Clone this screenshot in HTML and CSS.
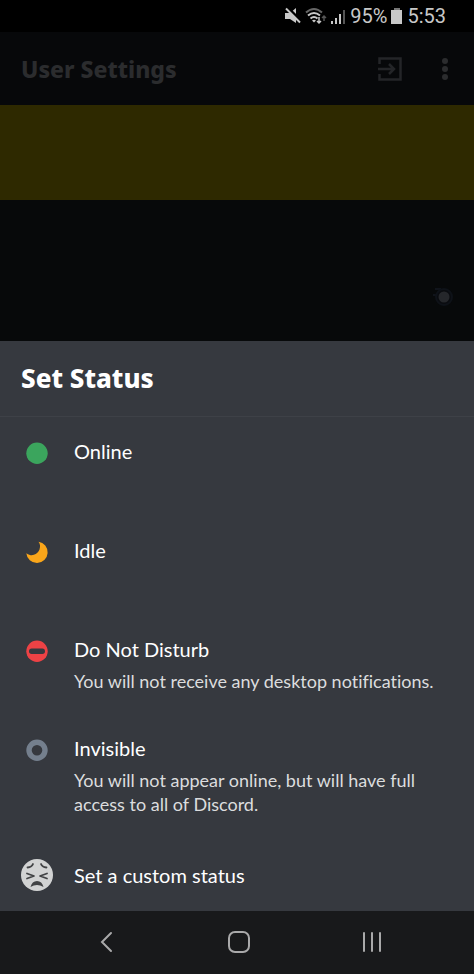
FILE: index.html
```
<!DOCTYPE html>
<html lang="en">
<head>
<meta charset="utf-8">
<meta name="viewport" content="width=device-width, initial-scale=1">
<title>User Settings</title>
<link rel="stylesheet" href="styles.css">
</head>
<body>
<div class="status-bar">
  <svg width="16" height="18" viewBox="0 0 16 18" aria-hidden="true">
    <path fill="#c8c8c8" d="M0 6h5l6-5v15l-6-4H0z"/>
    <path d="M2 0l14 14" stroke="#000" stroke-width="3"/>
    <path d="M1 1.500l14 14" stroke="#c8c8c8" stroke-width="2"/>
  </svg>
  <svg width="22" height="18" viewBox="0 0 22 18" fill="none" aria-hidden="true">
    <path d="M1 5.500q8-7 16 0" stroke="#666" stroke-width="2"/>
    <path d="M3 8.500q6-5 12 0M5.500 11.500q3.500-3 7 0" stroke="#c8c8c8" stroke-width="2"/>
    <path fill="#c8c8c8" d="M7 13.500q2-1.500 4 0l-2 2z"/>
    <path d="M14 10v6m-2-2l2 2 2-2" stroke="#c8c8c8" stroke-width="1.500"/>
    <path d="M19 14V9m-2 2l2-2 2 2" stroke="#555" stroke-width="1.500"/>
  </svg>
  <svg width="15" height="18" viewBox="0 0 15 18" aria-hidden="true">
    <path fill="#c8c8c8" d="M0 14h2v3H0zM4 11h2v6H4zM8 7h2v10H8z"/>
    <path fill="#555" d="M12 3h2v14h-2z"/>
  </svg>
  <span class="battery-level">95%</span>
  <svg width="12" height="18" viewBox="0 0 12 18" aria-hidden="true">
    <path fill="#777" d="M3 1h6v2H3z"/>
    <path fill="#c8c8c8" d="M0 3h11v14H0z"/>
  </svg>
  <time>5:53</time>
</div>

<header class="app-bar">
  <h1>User Settings</h1>
  <button class="icon-button" type="button" aria-label="Log out">
    <svg width="26" height="26" viewBox="0 0 26 26" fill="none" stroke="#242528" stroke-width="2.500">
      <path d="M2.500 8V2.500h21v21h-21V18M1 13h15M12 8l5 5-5 5"/>
    </svg>
  </button>
  <button class="icon-button" type="button" aria-label="More options">
    <svg width="6" height="22" viewBox="0 0 6 22" fill="#2b2c2e">
      <circle cx="3" cy="3" r="3"/><circle cx="3" cy="11" r="3"/><circle cx="3" cy="19" r="3"/>
    </svg>
  </button>
</header>

<div class="banner"></div>
<div class="profile">
  <svg width="30" height="22" viewBox="0 0 30 22" aria-hidden="true">
    <path d="M10 3h6M8 9h6" stroke="#10141b" stroke-width="2"/>
    <circle cx="19" cy="11" r="8" fill="#0a0c10" stroke="#0e1218" stroke-width="2"/>
    <circle cx="19" cy="11" r="5.500" fill="#25272b"/>
  </svg>
</div>

<main class="sheet">
  <h2>Set Status</h2>
  <button class="option" type="button">
    <svg width="32" height="32" viewBox="0 0 32 32" aria-hidden="true"><circle cx="16" cy="16.300" r="10.700" fill="#3ba55d"/></svg>
    <span class="label"><span class="name">Online</span></span>
  </button>
  <button class="option" type="button">
    <svg width="32" height="32" viewBox="0 0 32 32" aria-hidden="true"><path fill="#faa61a" d="M17.500 5.700A10.700 10.700 0 1 1 5.300 17.300A8.400 8.400 0 0 0 18.500 13.500Q20 9 17.500 5.700z"/></svg>
    <span class="label"><span class="name">Idle</span></span>
  </button>
  <button class="option" type="button">
    <svg width="32" height="32" viewBox="0 0 32 32" aria-hidden="true"><circle cx="16" cy="16.300" r="10.700" fill="#ed4245"/><rect x="8" y="13.600" width="16" height="5.400" rx="2.700" fill="#36393f"/></svg>
    <span class="label"><span class="name">Do Not Disturb</span><span class="detail">You will not receive any desktop notifications.</span></span>
  </button>
  <button class="option" type="button">
    <svg width="32" height="32" viewBox="0 0 32 32" aria-hidden="true"><circle cx="16" cy="16.300" r="8" fill="none" stroke="#747f8d" stroke-width="5.400"/></svg>
    <span class="label"><span class="name">Invisible</span><span class="detail">You will not appear online, but will have full access to all of Discord.</span></span>
  </button>
  <button class="option custom" type="button">
    <svg width="32" height="32" viewBox="0 0 32 32" aria-hidden="true">
      <circle cx="16" cy="16" r="16" fill="#d2d3d3"/>
      <g fill="none" stroke="#424345" stroke-width="1.800" stroke-linecap="round" stroke-linejoin="round">
        <path d="M6.500 8.500q4.500-.5 5.500-3.500M25.500 8.500q-4.500-.5-5.500-3.500"/>
        <path d="M6 14.500l7 2.500-7 2.500M26 14.500l-7 2.500 7 2.500"/>
      </g>
      <path fill="#424345" d="M9.500 28q1.500-6 6.500-6t6.500 6q-6.500-4-13 0z"/>
    </svg>
    <span class="label"><span class="name">Set a custom status</span></span>
  </button>
</main>

<nav class="system-nav" aria-label="System">
  <button type="button" aria-label="Back">
    <svg width="22" height="22" viewBox="0 0 22 22"><path d="M16 2l-9 9 9 9"/></svg>
  </button>
  <button type="button" aria-label="Home">
    <svg width="22" height="22" viewBox="0 0 22 22"><rect x="1" y="1" width="20" height="20" rx="6"/></svg>
  </button>
  <button type="button" aria-label="Recent apps">
    <svg width="22" height="22" viewBox="0 0 22 22"><path d="M3 2v18M11 2v18M19 2v18"/></svg>
  </button>
</nav>
</body>
</html>
```
FILE: styles.css
```
* {
  box-sizing: border-box;
}

body {
  margin: 0;
  min-height: 100vh;
  display: flex;
  flex-direction: column;
  background: #07090a;
  color: #fff;
  font-family: Lato, sans-serif;
  font-variant-ligatures: none;
}

button {
  border: 0;
  padding: 0;
  background: none;
  color: inherit;
  font: inherit;
  font-variant-ligatures: inherit;
  cursor: pointer;
}

svg {
  display: block;
  flex: none;
}

h1,
h2 {
  margin: 0;
  font-family: "Noto Sans", sans-serif;
  font-weight: 800;
}

.status-bar {
  height: 32px;
  padding: 0 28px 0 0;
  display: flex;
  align-items: center;
  justify-content: flex-end;
  gap: 4px;
  background: #000;
  color: #c8c8c8;
  font-family: Roboto, sans-serif;
  font-size: 20px;
}

.app-bar {
  height: 73px;
  padding: 0 26px 0 21px;
  display: flex;
  align-items: center;
  gap: 39px;
  background: #07080a;
}

.app-bar h1 {
  flex: 1;
  color: #2b2c2e;
  font-size: 23px;
}

.banner {
  height: 95px;
  background: #2e2900;
}

.profile {
  flex: 1;
  min-height: 141px;
  padding: 0 19px 33px;
  display: flex;
  align-items: flex-end;
  justify-content: flex-end;
}

.sheet {
  background: #36393f;
}

.sheet h2 {
  padding: 0 21px;
  border-bottom: 1px solid #3e4147;
  font-size: 26px;
  line-height: 75px;
}

.option {
  width: 100%;
  min-height: 99px;
  padding: 20px 21px 21px;
  display: flex;
  align-items: flex-start;
  gap: 21px;
  text-align: left;
}

.label {
  flex: 1;
  display: flex;
  flex-direction: column;
  gap: 6px;
}

.name {
  font-size: 20px;
  line-height: 28px;
}

.detail {
  color: #dcddde;
  font-size: 18px;
  line-height: 24px;
}

.custom {
  min-height: 74px;
  padding: 22px 21px 20px;
  align-items: center;
}

.system-nav {
  height: 63px;
  padding: 0 36px 2px 39px;
  display: flex;
  align-items: center;
  background: #18191b;
}

.system-nav button {
  flex: 1;
  display: flex;
  justify-content: center;
}

.system-nav svg {
  fill: none;
  stroke: #a9a9aa;
  stroke-width: 2;
  stroke-linecap: round;
}
```
